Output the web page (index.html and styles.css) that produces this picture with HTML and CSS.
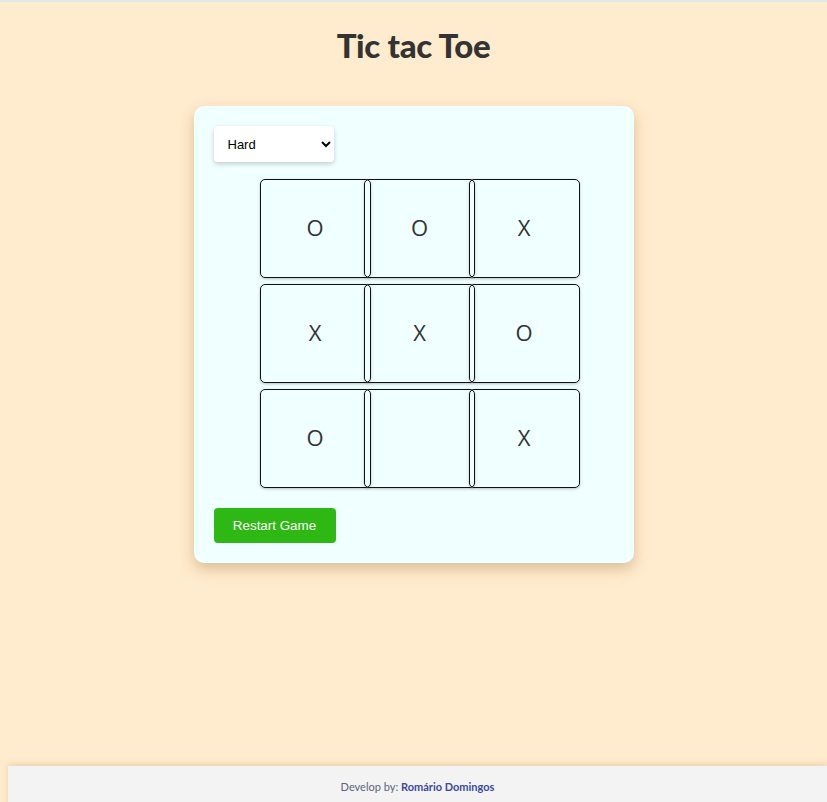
FILE: index.html
```html
<!DOCTYPE html>
<html lang="en">
<head>
<meta charset="utf-8">
<title>Tic tac Toe</title>
<link rel="stylesheet" href="styles.css">
</head>
<body>
<div class="page">
  <div class="topbar"></div>
  <h1 class="title">Tic tac Toe</h1>
  <main class="card">
    <select class="level">
      <option>Easy</option>
      <option>Medium</option>
      <option selected>Hard</option>
    </select>
    <div class="board">
      <button class="cell">O</button>
      <button class="cell">O</button>
      <button class="cell">X</button>
      <button class="cell">X</button>
      <button class="cell">X</button>
      <button class="cell">O</button>
      <button class="cell">O</button>
      <button class="cell"></button>
      <button class="cell">X</button>
    </div>
    <button class="restart">Restart Game</button>
  </main>
  <footer class="footer">Develop by: <strong class="author">Romário Domingos</strong></footer>
</div>
</body>
</html>
```

FILE: styles.css
```css
html, body {
  margin: 0;
  padding: 0;
}
body {
  background: #ffebcd;
  font-family: "Lato", "Open Sans", sans-serif;
  color: #333;
  overflow: hidden;
}
.page {
  display: flex;
  flex-direction: column;
  align-items: center;
  min-height: 808px;
}
.topbar {
  align-self: stretch;
  height: 2px;
  background: #dfe9ec;
}
.title {
  margin: 23px 0 0;
  font-size: 33px;
  font-weight: 900;
  line-height: 40px;
  color: #333;
  letter-spacing: -0.3px;
}
.card {
  margin-top: 41px;
  width: 400px;
  padding: 20px;
  background: #f0ffff;
  border-radius: 10px;
  box-shadow: 0 6px 14px rgba(150, 110, 60, 0.35);
  display: flex;
  flex-direction: column;
  align-items: flex-start;
}
.level {
  width: 120px;
  height: 36px;
  padding: 0 10px;
  border: none;
  border-radius: 4px;
  background: #fff;
  font-family: "Liberation Sans", Arial, sans-serif;
  font-size: 13px;
  color: #000;
  box-shadow: 0 2px 5px rgba(0, 0, 0, 0.2);
}
.board {
  align-self: center;
  margin-top: 16.5px;
  margin-left: 1px;
  display: grid;
  grid-template-columns: repeat(3, 100px);
  grid-auto-rows: 100px;
  column-gap: 4.5px;
  row-gap: 5px;
}
.cell {
  width: 111px;
  height: 99px;
  padding: 0 0 3px;
  border: 1px solid #111;
  border-radius: 5px;
  background: transparent;
  box-shadow: 0 1px 3px rgba(0, 0, 0, 0.25);
  font-family: "Open Sans", sans-serif;
  font-size: 22px;
  color: #333;
}
.restart {
  margin-top: 19.5px;
  width: 122px;
  height: 35px;
  border: none;
  border-radius: 4px;
  background: #2db814;
  color: #fff;
  font-family: "Liberation Sans", Arial, sans-serif;
  font-size: 13.4px;
}
.footer {
  margin-top: auto;
  align-self: stretch;
  margin-left: 8px;
  height: 42px;
  line-height: 42px;
  text-align: center;
  background: #f3f3f3;
  box-shadow: 0 -2px 6px rgba(180, 140, 90, 0.25);
  font-size: 11px;
  color: #5d6280;
}
.author {
  color: #3b4a9e;
  font-weight: 700;
}
```
